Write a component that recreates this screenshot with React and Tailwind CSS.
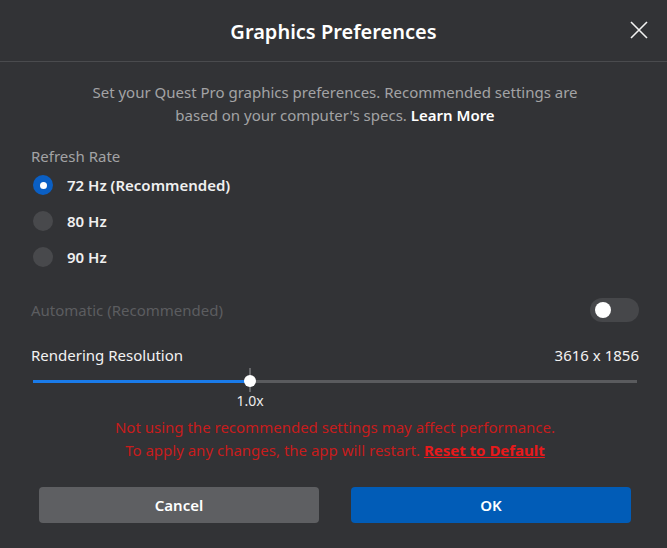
import React, { useState } from 'react';

const font = { fontFamily: '"Segoe UI", "Noto Sans", "Open Sans", sans-serif' };

function Radio({ checked, label, onClick }) {
  return (
    <button type="button" onClick={onClick} className="flex items-center h-[36px] text-left pl-[2px]">
      {checked ? (
        <span className="w-[20px] h-[20px] rounded-full bg-[#0a5fc4] flex items-center justify-center">
          <span className="w-[7px] h-[7px] rounded-full bg-white" />
        </span>
      ) : (
        <span className="w-[20px] h-[20px] rounded-full bg-[#48494c]" />
      )}
      <span className="ml-[14px] text-[15px] font-semibold text-[#f0f0f0]">{label}</span>
    </button>
  );
}

export default function App() {
  const [rate, setRate] = useState('72');

  return (
    <div className="w-[667px] h-[548px] bg-[#323336] text-white flex flex-col" style={font}>
      {/* 标题栏 */}
      <div className="relative h-[62px] pt-[2px] flex items-center justify-center border-b border-[#4a4b4e]">
        <h1 className="text-[20px] font-semibold text-white">Graphics Preferences</h1>
        <button type="button" className="absolute right-[19px] top-[21px] w-[18px] h-[18px]" aria-label="Close">
          <svg viewBox="0 0 18 18" className="w-[18px] h-[18px]">
            <path d="M1 1 L17 17 M17 1 L1 17" stroke="#f2f2f2" strokeWidth="1.6" fill="none" />
          </svg>
        </button>
      </div>

      <div className="pl-[31px] pr-[28px] pt-[19px] flex flex-col">
        <p className="text-center text-[15px] leading-[23px] text-[#a3a3a5]">
          Set your Quest Pro graphics preferences. Recommended settings are
          <br />
          based on your computer's specs.{' '}
          <span className="text-white font-semibold">Learn More</span>
        </p>

        <div className="mt-[19px] text-[15px] text-[#a3a3a5] leading-[20px]">Refresh Rate</div>
        <div className="flex flex-col mt-[1px]">
          <Radio checked={rate === '72'} label="72 Hz (Recommended)" onClick={() => setRate('72')} />
          <Radio checked={rate === '80'} label="80 Hz" onClick={() => setRate('80')} />
          <Radio checked={rate === '90'} label="90 Hz" onClick={() => setRate('90')} />
        </div>

        <div className="mt-[23px] flex items-center justify-between h-[24px]">
          <span className="text-[15px] text-[#5c5d60]">Automatic (Recommended)</span>
          <span className="w-[49px] h-[24px] rounded-full bg-[#46474a] flex items-center pl-[5px]">
            <span className="w-[16px] h-[16px] rounded-full bg-white" />
          </span>
        </div>

        <div className="mt-[22px] flex items-center justify-between h-[22px] text-[15px] text-[#f2f2f2]">
          <span>Rendering Resolution</span>
          <span>3616 x 1856</span>
        </div>

        {/* 滑块 */}
        <div className="relative mt-[2px] h-[24px] mx-[2px]">
          <div className="absolute left-0 right-0 top-[12px] h-[3px] bg-[#5a5b5e]" />
          <div className="absolute left-0 w-[217px] top-[12px] h-[3px] bg-[#1a7bea]" />
          <div className="absolute left-[216px] top-0 w-[2px] h-[24px] bg-[#66676a]" />
          <div className="absolute left-[211px] top-[7px] w-[12px] h-[12px] rounded-full bg-white" />
        </div>
        <div className="relative h-[20px] mt-[-2px]">
          <span className="absolute left-[219px] -translate-x-1/2 text-[14px] text-[#ececec]">1.0x</span>
        </div>

        <div className="mt-[6px] text-center text-[15px] leading-[23px] text-[#c81c1c]">
          Not using the recommended settings may affect performance.
          <br />
          To apply any changes, the app will restart.{' '}
          <span className="font-bold underline text-[#e8191b]">Reset to Default</span>
        </div>

        <div className="mt-[25px] flex gap-[32px] px-[8px]">
          <button type="button" className="flex-1 h-[36px] rounded-[4px] bg-[#5e5f62] text-[15px] font-semibold text-white">
            Cancel
          </button>
          <button type="button" className="flex-1 h-[36px] rounded-[4px] bg-[#015cb7] text-[15px] font-semibold text-white">
            OK
          </button>
        </div>
      </div>
    </div>
  );
}
